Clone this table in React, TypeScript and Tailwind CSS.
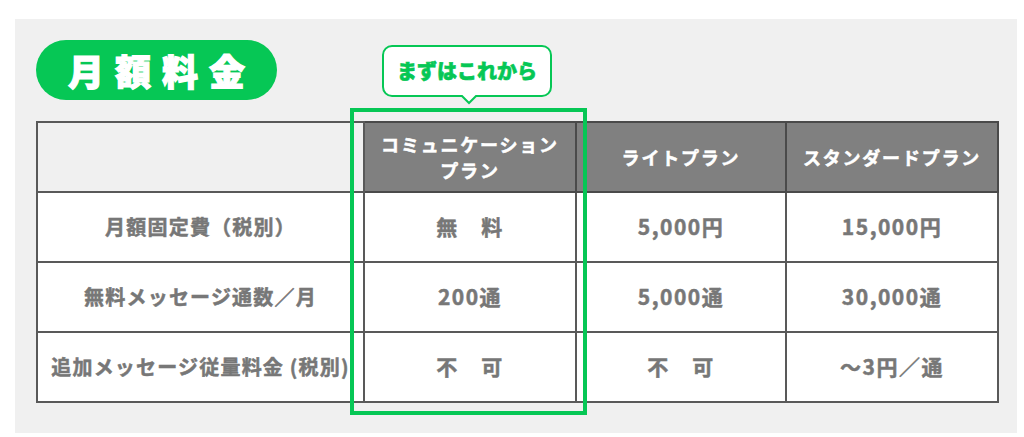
import React from 'react';

// Row data: label + one value per plan
const rows = [
  { label: '月額固定費（税別）', values: ['無　料', '5,000円', '15,000円'] },
  { label: '無料メッセージ通数／月', values: ['200通', '5,000通', '30,000通'] },
  { label: '追加メッセージ従量料金 (税別)', values: ['不　可', '不　可', '～3円／通'] },
];

const plans = [
  <>コミュニケーション<br />プラン</>,
  <>ライトプラン</>,
  <>スタンダードプラン</>,
];

const App: React.FC = () => {
  return (
    <div className="w-[1024px] h-[437px] bg-white pt-[19px] pl-[15px] font-['Noto_Sans_CJK_JP','Noto_Sans',sans-serif]">
      <div className="w-[1002px] h-[414px] bg-[#f0f0f0] pt-[21px] px-[21px]">
        {/* title row */}
        <div className="flex items-start h-[60px]">
          <div className="w-[241px] h-[60px] rounded-full bg-[#06c755] flex items-center justify-center pl-[11px]">
            <span className="text-white text-[36px] font-black tracking-[11px] leading-none [-webkit-text-stroke:1.2px_white]">月額料金</span>
          </div>
          <div className="relative ml-[105px] mt-[5px] w-[170px] h-[52px] bg-white border-2 border-[#06c755] rounded-[10px] flex items-center justify-center">
            <span className="text-[#06c755] text-[20px] font-black leading-none [-webkit-text-stroke:0.6px_#06c755]">まずはこれから</span>
            <svg className="absolute left-[77px] top-[48px]" width="16" height="10" viewBox="0 0 16 10">
              <path d="M0 0 L8 8 L16 0" fill="white" stroke="#06c755" strokeWidth="2" />
              <rect x="1" y="-2" width="14" height="2" fill="white" />
            </svg>
          </div>
        </div>

        {/* price table */}
        <div className="relative mt-[21px] w-[961px]">
          <table className="table-fixed border-collapse w-[961px] text-center">
            <colgroup>
              <col className="w-[327px]" />
              <col className="w-[212px]" />
              <col className="w-[210px]" />
              <col className="w-[212px]" />
            </colgroup>
            <thead>
              <tr className="h-[70px]">
                <th className="border-2 border-[#595959]" />
                {plans.map((p, i) => (
                  <th
                    key={i}
                    className="border-2 border-[#4a4a4a] bg-[#808080] text-white text-[18px] font-bold tracking-[1.8px] leading-[26px] [-webkit-text-stroke:0.5px_white]"
                  >
                    {p}
                  </th>
                ))}
              </tr>
            </thead>
            <tbody>
              {rows.map((r) => (
                <tr key={r.label} className="h-[70px] bg-white">
                  <td className="border-2 border-[#595959] text-[#777] text-[20px] font-bold tracking-[1.2px] whitespace-nowrap [-webkit-text-stroke:0.5px_#777]">
                    {r.label}
                  </td>
                  {r.values.map((v, i) => (
                    <td key={i} className="border-2 border-[#595959] text-[#777] text-[21px] font-bold tracking-[1.5px] [-webkit-text-stroke:0.5px_#777]">
                      {v}
                    </td>
                  ))}
                </tr>
              ))}
            </tbody>
          </table>
          {/* highlight frame round the first plan */}
          <div className="absolute left-[314px] top-[-13px] w-[237px] h-[307px] border-4 border-[#06c755] pointer-events-none" />
        </div>
      </div>
    </div>
  );
};

export default App;
